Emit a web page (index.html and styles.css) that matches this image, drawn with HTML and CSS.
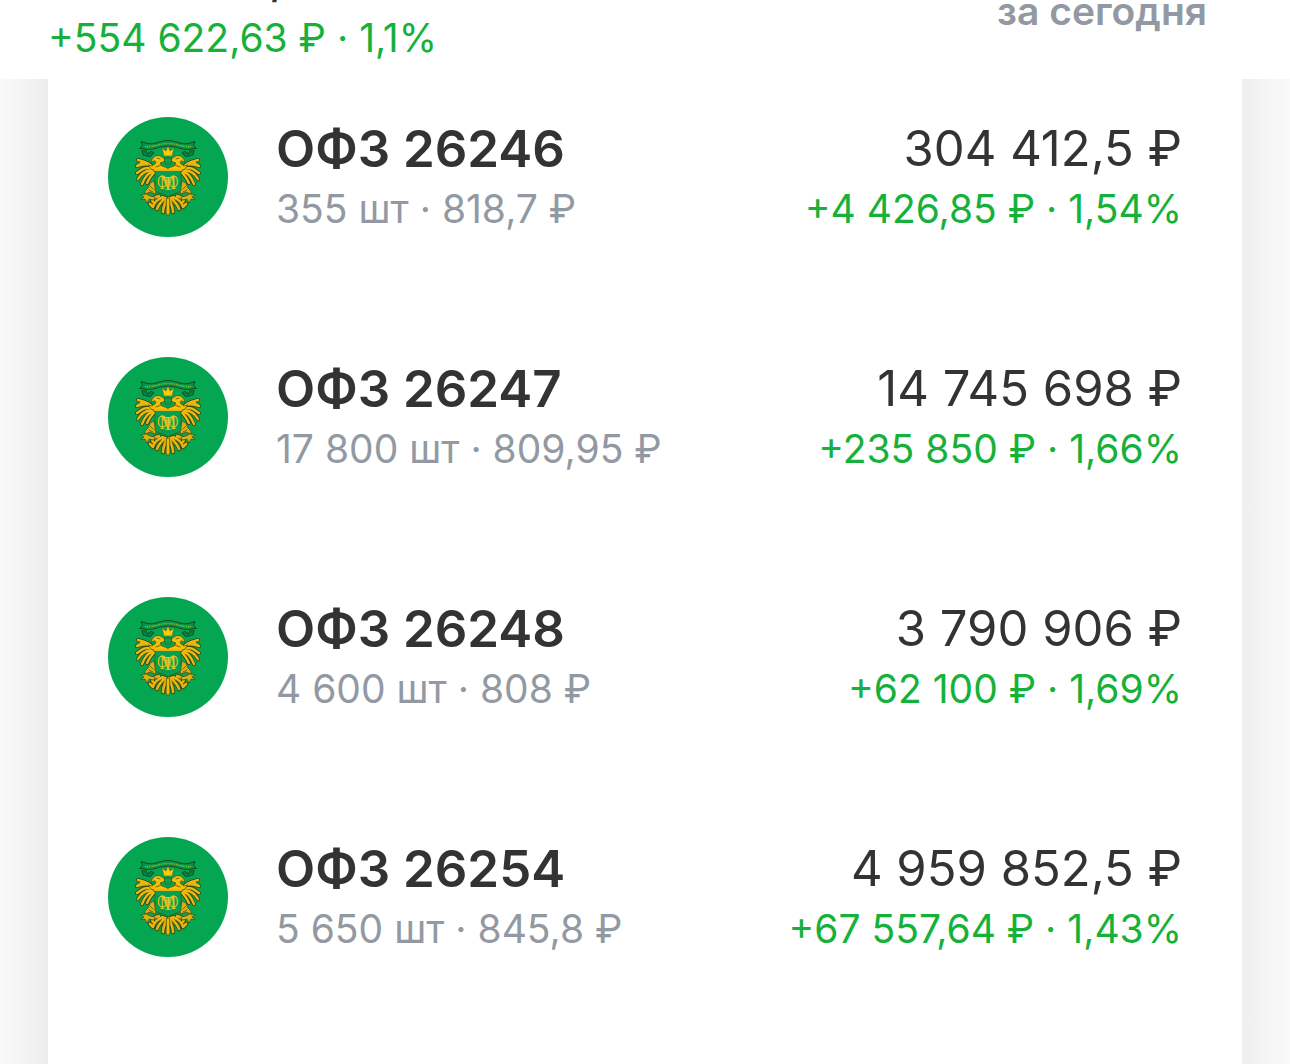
FILE: index.html
```
<!DOCTYPE html>
<html lang="ru">
<head>
	<meta charset="UTF-8">
	<meta name="viewport" content="width=device-width, initial-scale=1">
	<title>Портфель</title>
	<link rel="stylesheet" href="styles.css">
</head>
<body>

	<!-- emblem, the left half is mirrored -->
	<svg class="sprite" aria-hidden="true">
		<defs>
			<path id="feathers" d="M46 52C42 46 37 45 30 43M42 48C37 46 33 48 29 49L35 45M44 52C38 49 33 53 29 56M44 54C38 53 33 57 30 62M45 55C41 55 37 60 34 67M46 56C43 58 41 62 39 66"/>
			<path id="tail" d="M59 81C57 86 55 90 55 95M57 81C53 85 50 88 49 92M55 80C50 82 46 86 45 90L42 87M51 79C47 80 43 82 45 85"/>
			<g id="half" stroke-linejoin="round" stroke-linecap="round">
				<!-- ribbon -->
				<path d="M60 23.500C52 23.500 46 28 40 26.500C37 26 35 25 33 24.500L34.500 28.500L31.500 31.500C35 31 37 32.500 40 32.500C46 33 52 29 60 29" fill="#079447" stroke="#0f4a26" stroke-width="1"/>
				<path d="M37 29.500C45 30.500 51 26.500 60 26.500" fill="none" stroke="#86b83a" stroke-width="1.600" stroke-dasharray="1 0.800" stroke-linecap="butt"/>
				<path d="M34 33.500L35 38L42 40L46 36L43 34L40 37L38 34Z" fill="#087f3d" stroke="#0f4a26" stroke-width="0.9"/>
				<!-- wing -->
				<g fill="none">
					<use href="#feathers" stroke="#2c4a14" stroke-width="4"/>
					<use href="#feathers" stroke="#eeb70f" stroke-width="2.400"/>
					<use href="#tail" stroke="#2c4a14" stroke-width="4.400"/>
					<use href="#tail" stroke="#e6b312" stroke-width="2.600"/>
				</g>
				<g stroke="#3f4d14" stroke-width="0.7">
					<!-- head and neck -->
					<path d="M43 45C44 41 48 37 52 39C55 40 56 42 59 43L55 45L52 46L54 49L60 51V54H48L43 52L40 48L44 49L48 46L47 44Z" fill="#f5bd0c"/>
					<path d="M49 41L52 42M48 50L53 48" fill="none"/>
					<!-- leg -->
					<path d="M42 66L46 64L47 69L49 72L47 77L42 75L37 77L37 74L40 71Z" fill="#dfae12"/>
					<path d="M42 69L45 72M41 73L45 75" fill="none"/>
					<path d="M38 77L33 78L36 80L33 83L37 82L39 86L41 82L46 83L47 80L42 79Z" fill="#e0b010"/>
				</g>
			</g>
			<g id="emblem">
				<circle cx="60" cy="60" r="60" fill="#05a651"/>
				<use href="#half"/>
				<use href="#half" transform="matrix(-1 0 0 1 120 0)"/>
				<!-- crown -->
				<path d="M56 39L54 31L58 34L60 29L62 34L66 31L64 39Z" fill="#ffc80a" stroke="#6b6a14" stroke-width="0.6"/>
				<path d="M56 41H64L63 46L60 48L57 46Z" fill="#07a34e" stroke="#295a20" stroke-width="0.8"/>
				<!-- shield -->
				<path d="M47 53H73V73C73 76 65 76 60 80C55 76 47 76 47 73Z" fill="#05a04d" stroke="#3f5a14" stroke-width="0.8"/>
				<path d="M46 53H74" stroke="#f5bd0c" stroke-width="1.800"/>
				<g fill="none" stroke="#d9c02a" stroke-width="1.300">
					<ellipse cx="54.500" cy="64.500" rx="4" ry="5.500"/>
					<ellipse cx="65.500" cy="64.500" rx="4" ry="5.500"/>
				</g>
				<g class="monogram">
					<text x="60" y="72">М</text>
					<text x="60" y="73">Т</text>
				</g>
				<path d="M58.500 81H61.500L62 96L60 99L58 96Z" fill="#f2b90d" stroke="#2c4a14" stroke-width="0.7"/>
			</g>
		</defs>
	</svg>

	<header class="header">
		<div class="total">
			<p class="total-sum">50 171 012,6 ₽</p>
			<p class="total-profit">+554 622,63 ₽ · 1,1%</p>
		</div>
		<p class="period">за сегодня</p>
	</header>

	<main class="content">
		<ul class="bonds">
			<li class="bond">
				<svg class="bond-logo" viewBox="0 0 120 120" aria-hidden="true"><use href="#emblem"/></svg>
				<div class="bond-info">
					<h2 class="bond-name">ОФЗ 26246</h2>
					<p class="bond-count">355 шт · 818,7 ₽</p>
				</div>
				<div class="bond-value">
					<p class="bond-sum">304 412,5 ₽</p>
					<p class="bond-profit">+4 426,85 ₽ · 1,54%</p>
				</div>
			</li>
			<li class="bond">
				<svg class="bond-logo" viewBox="0 0 120 120" aria-hidden="true"><use href="#emblem"/></svg>
				<div class="bond-info">
					<h2 class="bond-name">ОФЗ 26247</h2>
					<p class="bond-count">17 800 шт · 809,95 ₽</p>
				</div>
				<div class="bond-value">
					<p class="bond-sum">14 745 698 ₽</p>
					<p class="bond-profit">+235 850 ₽ · 1,66%</p>
				</div>
			</li>
			<li class="bond">
				<svg class="bond-logo" viewBox="0 0 120 120" aria-hidden="true"><use href="#emblem"/></svg>
				<div class="bond-info">
					<h2 class="bond-name">ОФЗ 26248</h2>
					<p class="bond-count">4 600 шт · 808 ₽</p>
				</div>
				<div class="bond-value">
					<p class="bond-sum">3 790 906 ₽</p>
					<p class="bond-profit">+62 100 ₽ · 1,69%</p>
				</div>
			</li>
			<li class="bond">
				<svg class="bond-logo" viewBox="0 0 120 120" aria-hidden="true"><use href="#emblem"/></svg>
				<div class="bond-info">
					<h2 class="bond-name">ОФЗ 26254</h2>
					<p class="bond-count">5 650 шт · 845,8 ₽</p>
				</div>
				<div class="bond-value">
					<p class="bond-sum">4 959 852,5 ₽</p>
					<p class="bond-profit">+67 557,64 ₽ · 1,43%</p>
				</div>
			</li>
		</ul>
	</main>

</body>
</html>
```
FILE: styles.css
```
* {
	box-sizing: border-box;
}
body {
	display: flex;
	flex-direction: column;
	min-height: 100vh;
	margin: 0;
	background: #fff;
	color: #333;
	font-family: Inter, "Liberation Sans", sans-serif;
	font-size: 39px;
	line-height: 60px;
}
h2, p, ul {
	margin: 0;
	padding: 0;
}
.sprite {
	position: absolute;
	width: 0;
	height: 0;
}
.monogram {
	fill: #e3c524;
	font-family: "Liberation Serif", serif;
	font-size: 19px;
	text-anchor: middle;
}

/* only the lower edge of the header stays on screen */
.header {
	display: flex;
	justify-content: space-between;
	align-items: flex-end;
	height: 79px;
	padding: 0 83px 11px 48px;
	overflow: hidden;
	background: #fff;
}
.total-sum {
	font-size: 45px;
	font-weight: 600;
}
.total-profit {
	color: #16b13a;
}
.period {
	padding-bottom: 27px;
	color: #9299a2;
	font-weight: 600;
}

.content {
	display: flex;
	flex: 1;
	padding: 0 48px;
	background:
		linear-gradient(to right, #fafafa, #ededed) left / 48px 100% no-repeat,
		linear-gradient(to left, #fafafa, #efefef) right / 48px 100% no-repeat;
}
.bonds {
	display: flex;
	flex: 1;
	flex-direction: column;
	gap: 120px;
	padding: 38px 60px;
	list-style: none;
}
.bond {
	display: flex;
	height: 120px;
}
.bond-logo {
	width: 120px;
	height: 120px;
	margin-right: 48px;
}
.bond-info,
.bond-value {
	padding-top: 2px;
	white-space: nowrap;
}
.bond-value {
	margin-left: auto;
	text-align: right;
}
.bond-name {
	font-size: 51px;
	font-weight: 600;
}
.bond-sum {
	font-size: 49px;
}
.bond-count {
	color: #9299a2;
}
.bond-profit {
	color: #16b13a;
}
```
